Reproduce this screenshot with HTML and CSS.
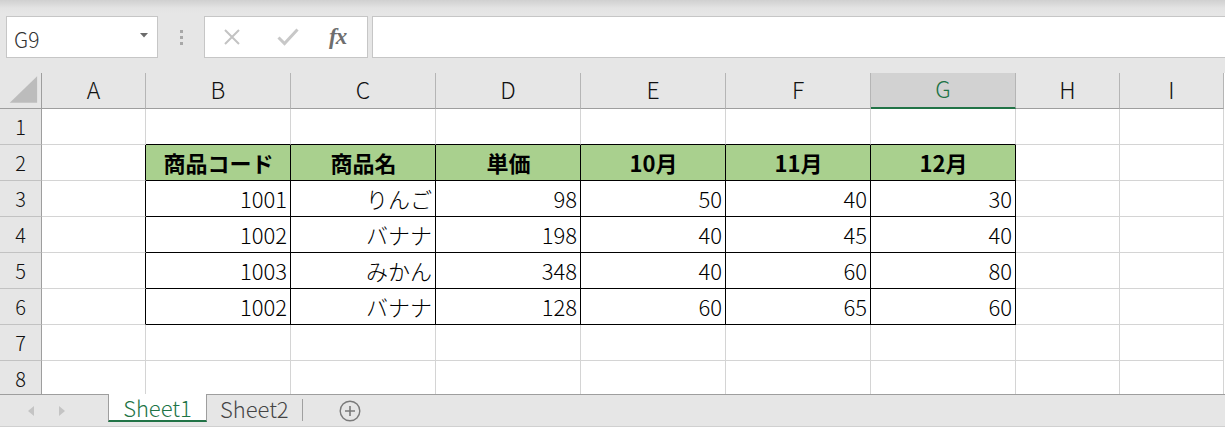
FILE: index.html
```html
<!DOCTYPE html>
<html lang="ja">
<head>
<meta charset="utf-8">
<link rel="stylesheet" href="styles.css">
</head>
<body>
<div class="app">
  <div class="topbar">
    <div class="namebox">
      <span class="ref">G9</span>
      <svg class="caret" width="8" height="5" viewBox="0 0 8 5"><polygon points="0,0 8,0 4,4.5" fill="#6b6b6b"/></svg>
    </div>
    <div class="grip"><i></i><i></i><i></i></div>
    <div class="fnbox">
      <svg class="ico-x" width="18" height="16" viewBox="0 0 18 16"><path d="M2 1 L16 15 M16 1 L2 15" stroke="#c3c3c3" stroke-width="2" fill="none"/></svg>
      <svg class="ico-ok" width="22" height="18" viewBox="0 0 22 18"><path d="M1.5 9.5 L7.5 15.5 L20.5 1.5" stroke="#c8c8c8" stroke-width="3" fill="none"/></svg>
      <span class="fx">fx</span>
    </div>
    <div class="formula"></div>
  </div>

  <div class="sheet">
    <div class="corner"><svg width="42" height="36" viewBox="0 0 42 36"><polygon points="10,31 38,31 38,4" fill="#bcbcbc"/></svg></div>
    <div class="ch">A</div><div class="ch">B</div><div class="ch">C</div><div class="ch">D</div><div class="ch">E</div><div class="ch">F</div><div class="ch sel">G</div><div class="ch">H</div><div class="ch">I</div>

    <div class="rh">1</div>
    <div class="c"></div><div class="c tt"></div><div class="c tt"></div><div class="c tt"></div><div class="c tt"></div><div class="c tt"></div><div class="c tt"></div><div class="c"></div><div class="c"></div>

    <div class="rh">2</div>
    <div class="c tl"></div><div class="c t hd">商品コード</div><div class="c t hd">商品名</div><div class="c t hd">単価</div><div class="c t hd">10月</div><div class="c t hd">11月</div><div class="c t hd">12月</div><div class="c"></div><div class="c"></div>

    <div class="rh">3</div>
    <div class="c tl"></div><div class="c t n">1001</div><div class="c t n">りんご</div><div class="c t n">98</div><div class="c t n">50</div><div class="c t n">40</div><div class="c t n">30</div><div class="c"></div><div class="c"></div>

    <div class="rh">4</div>
    <div class="c tl"></div><div class="c t n">1002</div><div class="c t n">バナナ</div><div class="c t n">198</div><div class="c t n">40</div><div class="c t n">45</div><div class="c t n">40</div><div class="c"></div><div class="c"></div>

    <div class="rh">5</div>
    <div class="c tl"></div><div class="c t n">1003</div><div class="c t n">みかん</div><div class="c t n">348</div><div class="c t n">40</div><div class="c t n">60</div><div class="c t n">80</div><div class="c"></div><div class="c"></div>

    <div class="rh">6</div>
    <div class="c tl"></div><div class="c t n">1002</div><div class="c t n">バナナ</div><div class="c t n">128</div><div class="c t n">60</div><div class="c t n">65</div><div class="c t n">60</div><div class="c"></div><div class="c"></div>

    <div class="rh">7</div>
    <div class="c"></div><div class="c"></div><div class="c"></div><div class="c"></div><div class="c"></div><div class="c"></div><div class="c"></div><div class="c"></div><div class="c"></div>

    <div class="rh">8</div>
    <div class="c"></div><div class="c"></div><div class="c"></div><div class="c"></div><div class="c"></div><div class="c"></div><div class="c"></div><div class="c"></div><div class="c"></div>
  </div>

  <div class="tabs">
    <div class="nav">
      <span class="tri-l"></span>
      <span class="tri-r"></span>
    </div>
    <div class="tab active">Sheet1</div>
    <div class="tab">Sheet2</div>
    <div class="sep"></div>
    <svg class="add" width="22" height="22" viewBox="0 0 22 22"><circle cx="11" cy="11" r="9.8" stroke="#7a7a7a" stroke-width="1.4" fill="none"/><path d="M11 6 V16 M6 11 H16" stroke="#7a7a7a" stroke-width="1.6"/></svg>
  </div>
</div>
</body>
</html>
```
FILE: styles.css
```css
html, body {
  margin: 0;
  padding: 0;
}
body {
  width: 1225px;
  height: 427px;
  overflow: hidden;
  background: #e6e6e6;
  font-family: "Noto Sans CJK JP", "Noto Sans", sans-serif;
  color: #000;
}
.app {
  display: flex;
  flex-direction: column;
  height: 427px;
}

/* top formula area */
.topbar {
  height: 73px;
  box-sizing: border-box;
  padding: 16px 0 0 6px;
  display: flex;
  align-items: flex-start;
  background: linear-gradient(#d0d0d0 0px, #e3e3e3 8px, #e6e6e6 14px);
}
.namebox {
  width: 152px;
  height: 42px;
  box-sizing: border-box;
  background: #fff;
  border: 1px solid #c6c6c6;
  display: flex;
  align-items: center;
  justify-content: space-between;
  padding: 0 9px 0 7px;
}
.ref {
  font-size: 21px;
  font-weight: 300;
  color: #333;
  line-height: 1;
  margin-top: 5px;
}
.caret {
  margin-top: -4px;
}
.grip {
  width: 46px;
  height: 42px;
  display: flex;
  flex-direction: column;
  align-items: center;
  justify-content: center;
  gap: 3px;
}
.grip i {
  display: block;
  width: 3px;
  height: 3px;
  background: #a8a8a8;
}
.fnbox {
  width: 164px;
  height: 42px;
  box-sizing: border-box;
  background: #fff;
  border: 1px solid #c6c6c6;
  display: flex;
  align-items: center;
  padding-left: 18px;
}
.ico-x {
  margin-right: 36px;
}
.ico-ok {
  margin-right: 30px;
}
.fx {
  font-family: "Liberation Serif", "DejaVu Serif", serif;
  font-style: italic;
  font-weight: bold;
  font-size: 23px;
  color: #6e6e6e;
  letter-spacing: -1px;
}
.formula {
  flex: 1;
  height: 42px;
  box-sizing: border-box;
  margin-left: 4px;
  margin-right: -2px;
  background: #fff;
  border: 1px solid #c6c6c6;
}

/* grid */
.sheet {
  height: 322px;
  overflow: hidden;
  display: grid;
  grid-template-columns: 42px 104px repeat(6, 145px) 104px 104px;
  grid-auto-rows: 36px;
  background: #fff;
}
.sheet > div {
  box-sizing: border-box;
  display: flex;
  align-items: center;
}
.corner {
  background: #e6e6e6;
  border-right: 1px solid #9e9e9e;
  border-bottom: 1px solid #9e9e9e;
}
.corner svg {
  display: block;
}
.ch {
  background: #e6e6e6;
  border-right: 1px solid #b5b5b5;
  border-bottom: 1px solid #9e9e9e;
  justify-content: center;
  font-size: 23px;
  font-weight: 300;
  color: #111;
  padding-bottom: 3px;
}
.ch.sel {
  background: #d2d2d2;
  border-bottom: 2px solid #217346;
  color: #217346;
}
.rh {
  background: #e6e6e6;
  border-right: 1px solid #9e9e9e;
  border-bottom: 1px solid #c2c2c2;
  justify-content: center;
  font-size: 20px;
  font-weight: 300;
  color: #111;
}
.c {
  border-right: 1px solid #d4d4d4;
  border-bottom: 1px solid #d4d4d4;
  font-size: 22px;
  font-weight: 300;
  padding: 0 3px 0 4px;
}
.c.tt {
  border-bottom-color: #000;
}
.c.tl {
  border-right-color: #000;
}
.c.t {
  border-right-color: #000;
  border-bottom-color: #000;
}
.c.hd {
  background: #a9d08e;
  font-weight: bold;
  justify-content: center;
}
.c.n {
  justify-content: flex-end;
}

/* sheet tabs */
.tabs {
  flex: 1;
  box-sizing: border-box;
  border-top: 1px solid #9e9e9e;
  border-bottom: 1px solid #d0d0d0;
  display: flex;
  align-items: flex-start;
}
.nav {
  width: 108px;
  height: 31px;
  display: flex;
  align-items: center;
  padding-left: 28px;
  box-sizing: border-box;
  gap: 25px;
}
.tri-l, .tri-r {
  width: 0;
  height: 0;
  border-top: 5px solid transparent;
  border-bottom: 5px solid transparent;
}
.tri-l {
  border-right: 6px solid #c4c4c4;
}
.tri-r {
  border-left: 6px solid #c4c4c4;
}
.tab {
  height: 27px;
  display: flex;
  align-items: center;
  font-size: 22px;
  font-weight: 300;
  color: #444;
  padding: 0 12px 2px 13px;
  box-sizing: border-box;
}
.tab.active {
  width: 99px;
  height: 28px;
  margin-top: -1px;
  justify-content: center;
  padding: 0;
  background: #fff;
  border-left: 1px solid #9e9e9e;
  border-right: 1px solid #9e9e9e;
  border-bottom: 2px solid #217346;
  color: #217346;
}
.sep {
  width: 1px;
  height: 22px;
  margin-top: 4px;
  margin-left: 1px;
  background: #a0a0a0;
}
.add {
  margin-left: 36px;
  margin-top: 5px;
}
```
